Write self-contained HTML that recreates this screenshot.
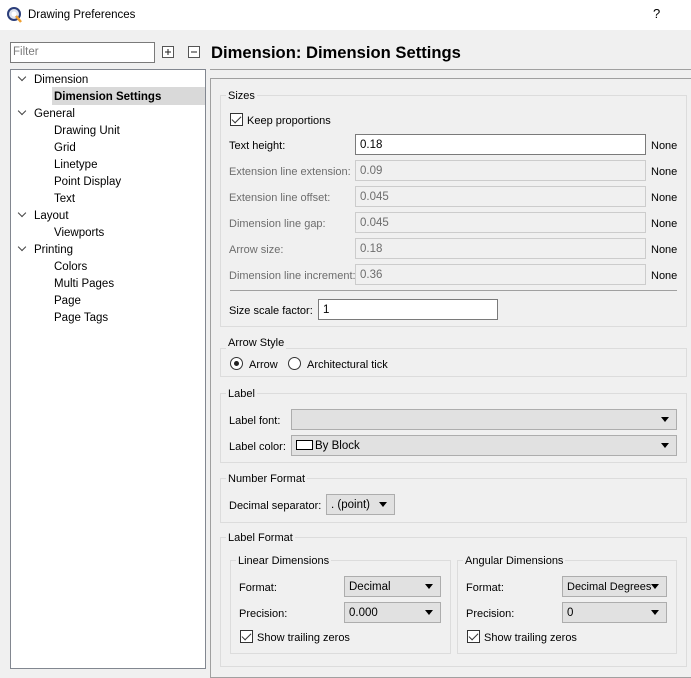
<!DOCTYPE html>
<html><head><meta charset="utf-8"><style>
*{box-sizing:border-box;margin:0;padding:0}
body{width:691px;height:658px;overflow:hidden;background:#f0f0f0;font-family:"Liberation Sans",sans-serif;font-size:11px;color:#000;position:relative}
.a{position:absolute;white-space:nowrap;line-height:14px}
.l{margin-top:1px}
.g{position:absolute;border:1px solid #dcdcdc}
.gt{position:absolute;background:#f0f0f0;padding:0 2px;line-height:14px;margin-top:1px}
.in{position:absolute;height:21px;border:1px solid #7a7a7a;background:#fff;padding-left:4px;padding-top:1px;line-height:19px;font-size:11.5px}
.dis{border-color:#ccc;color:#6d6d6d;background:#f0f0f0}
.dl{color:#6d6d6d}
.cb{position:absolute;height:21px;border:1px solid #adadad;background:#e1e1e1;padding-left:4px;padding-top:1px;line-height:19px;font-size:11.5px;white-space:nowrap}
.cb:after{content:"";position:absolute;right:7px;top:7px;border-left:4px solid transparent;border-right:4px solid transparent;border-top:5px solid #000}
.chk{position:absolute;width:13px;height:13px;border:1px solid #333;background:#fff}
.chk:after{content:"";position:absolute;left:3px;top:0px;width:4px;height:8px;border:solid #333;border-width:0 1.5px 1.5px 0;transform:rotate(45deg)}
.rad{position:absolute;width:13px;height:13px;border:1px solid #333;border-radius:50%;background:#fff}
.t{position:absolute;left:0;line-height:17px;font-size:11.5px;white-space:nowrap;margin-top:1px}
.chev{position:absolute;left:16px;width:6px;height:6px;border:solid #444;border-width:0 1.5px 1.5px 0;transform:rotate(45deg)}
</style></head><body>
<div class="a" style="left:0;top:0;width:691px;height:30px;background:#fff"></div>
<svg class="a" style="left:7px;top:7px" width="16" height="16"><circle cx="7" cy="7" r="6" fill="#dde3ee" stroke="#2b3e7a" stroke-width="2"/><circle cx="7" cy="7" r="2.5" fill="#fff"/><path d="M9 9 L14 15" stroke="#f0a030" stroke-width="2.5"/></svg>
<div class="a" style="left:28px;top:8px;font-size:11.5px">Drawing Preferences</div>
<div class="a" style="left:653px;top:7px;font-size:13px">?</div>

<div class="a" style="left:10px;top:42px;width:145px;height:21px;border:1px solid #7a7a7a;background:#fff;color:#7a7a7a;padding-left:2px;line-height:19px;font-size:11.5px">Filter</div>
<svg class="a" style="left:162px;top:46px" width="12" height="12"><rect x="0.5" y="0.5" width="11" height="11" fill="#fff" stroke="#555"/><path d="M3 6H9M6 3V9" stroke="#222"/></svg>
<svg class="a" style="left:188px;top:46px" width="12" height="12"><rect x="0.5" y="0.5" width="11" height="11" fill="#fff" stroke="#555"/><path d="M3 6H9" stroke="#222"/></svg>
<div class="a" style="left:211px;top:42px;font-size:16.6px;font-weight:bold;line-height:22px">Dimension: Dimension Settings</div>

<div class="a" style="left:10px;top:69px;width:196px;height:600px;border:1px solid #828790;background:#fff">
 <div class="a" style="left:41px;top:17px;width:153px;height:18px;background:#d9d9d9"></div>
 <div class="chev" style="top:4px;left:8px"></div>
 <div class="t" style="left:23px;top:1px">Dimension</div>
 <div class="t" style="left:43px;top:18px;font-weight:bold">Dimension Settings</div>
 <div class="chev" style="top:38px;left:8px"></div>
 <div class="t" style="left:23px;top:35px">General</div>
 <div class="t" style="left:43px;top:52px">Drawing Unit</div>
 <div class="t" style="left:43px;top:69px">Grid</div>
 <div class="t" style="left:43px;top:86px">Linetype</div>
 <div class="t" style="left:43px;top:103px">Point Display</div>
 <div class="t" style="left:43px;top:120px">Text</div>
 <div class="chev" style="top:140px;left:8px"></div>
 <div class="t" style="left:23px;top:137px">Layout</div>
 <div class="t" style="left:43px;top:154px">Viewports</div>
 <div class="chev" style="top:174px;left:8px"></div>
 <div class="t" style="left:23px;top:171px">Printing</div>
 <div class="t" style="left:43px;top:188px">Colors</div>
 <div class="t" style="left:43px;top:205px">Multi Pages</div>
 <div class="t" style="left:43px;top:222px">Page</div>
 <div class="t" style="left:43px;top:239px">Page Tags</div>
</div>

<div class="a" style="left:210px;top:69px;width:481px;height:1px;background:#a0a0a0"></div>
<div class="a" style="left:210px;top:78px;width:490px;height:600px;border:1px solid #a0a0a0;border-right:none"></div>

<div class="g" style="left:220px;top:95px;width:467px;height:232px"></div>
<div class="gt" style="left:226px;top:88px">Sizes</div>
<div class="chk" style="left:230px;top:113px"></div>
<div class="a l" style="left:247px;top:113px">Keep proportions</div>
<div class="a l" style="left:229px;top:138px">Text height:</div>
<div class="in" style="left:355px;top:134px;width:291px">0.18</div>
<div class="a l" style="left:651px;top:138px">None</div>
<div class="a dl l" style="left:229px;top:164px">Extension line extension:</div>
<div class="in dis" style="left:355px;top:160px;width:291px">0.09</div>
<div class="a l" style="left:651px;top:164px">None</div>
<div class="a dl l" style="left:229px;top:190px">Extension line offset:</div>
<div class="in dis" style="left:355px;top:186px;width:291px">0.045</div>
<div class="a l" style="left:651px;top:190px">None</div>
<div class="a dl l" style="left:229px;top:216px">Dimension line gap:</div>
<div class="in dis" style="left:355px;top:212px;width:291px">0.045</div>
<div class="a l" style="left:651px;top:216px">None</div>
<div class="a dl l" style="left:229px;top:242px">Arrow size:</div>
<div class="in dis" style="left:355px;top:238px;width:291px">0.18</div>
<div class="a l" style="left:651px;top:242px">None</div>
<div class="a dl l" style="left:229px;top:268px">Dimension line increment:</div>
<div class="in dis" style="left:355px;top:264px;width:291px">0.36</div>
<div class="a l" style="left:651px;top:268px">None</div>
<div class="a" style="left:230px;top:290px;width:447px;height:1px;background:#a0a0a0"></div>
<div class="a l" style="left:229px;top:303px">Size scale factor:</div>
<div class="in" style="left:318px;top:299px;width:180px">1</div>

<div class="g" style="left:220px;top:348px;width:467px;height:29px"></div>
<div class="gt" style="left:226px;top:335px">Arrow Style</div>
<div class="rad" style="left:230px;top:357px"></div>
<div class="a" style="left:234px;top:361px;width:5px;height:5px;border-radius:50%;background:#222"></div>
<div class="a l" style="left:249px;top:357px">Arrow</div>
<div class="rad" style="left:288px;top:357px"></div>
<div class="a l" style="left:307px;top:357px">Architectural tick</div>

<div class="g" style="left:220px;top:393px;width:467px;height:70px"></div>
<div class="gt" style="left:226px;top:386px">Label</div>
<div class="a l" style="left:229px;top:413px">Label font:</div>
<div class="cb" style="left:291px;top:409px;width:386px"></div>
<div class="a l" style="left:229px;top:439px">Label color:</div>
<div class="cb" style="left:291px;top:435px;width:386px;padding-left:4px"><span style="display:inline-block;width:17px;height:10px;border:1px solid #000;background:#fff;vertical-align:-1px;margin-right:2px"></span>By Block</div>

<div class="g" style="left:220px;top:478px;width:467px;height:45px"></div>
<div class="gt" style="left:226px;top:471px">Number Format</div>
<div class="a l" style="left:229px;top:498px">Decimal separator:</div>
<div class="cb" style="left:326px;top:494px;width:69px">. (point)</div>

<div class="g" style="left:220px;top:537px;width:467px;height:130px"></div>
<div class="gt" style="left:226px;top:530px">Label Format</div>
<div class="g" style="left:230px;top:560px;width:221px;height:94px"></div>
<div class="gt" style="left:236px;top:553px">Linear Dimensions</div>
<div class="a l" style="left:239px;top:580px">Format:</div>
<div class="cb" style="left:344px;top:576px;width:97px">Decimal</div>
<div class="a l" style="left:239px;top:606px">Precision:</div>
<div class="cb" style="left:344px;top:602px;width:97px">0.000</div>
<div class="chk" style="left:240px;top:630px"></div>
<div class="a l" style="left:257px;top:630px">Show trailing zeros</div>
<div class="g" style="left:457px;top:560px;width:220px;height:94px"></div>
<div class="gt" style="left:463px;top:553px">Angular Dimensions</div>
<div class="a l" style="left:466px;top:580px">Format:</div>
<div class="cb" style="left:562px;top:576px;width:105px;font-size:11px">Decimal Degrees</div>
<div class="a l" style="left:466px;top:606px">Precision:</div>
<div class="cb" style="left:562px;top:602px;width:105px">0</div>
<div class="chk" style="left:467px;top:630px"></div>
<div class="a l" style="left:484px;top:630px">Show trailing zeros</div>
</body></html>
